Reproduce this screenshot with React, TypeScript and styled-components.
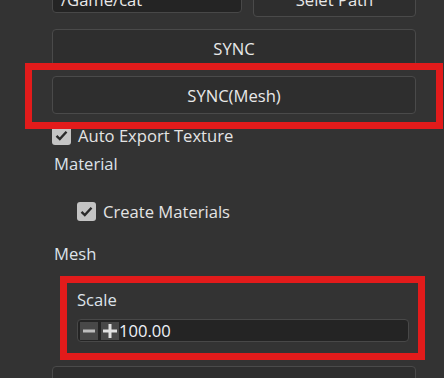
import React from "react";
import styled, { createGlobalStyle } from "styled-components";

const Global = createGlobalStyle`
  html, body { margin: 0; padding: 0; background: #333333; overflow: hidden; }
  body { font-family: "Open Sans", "Noto Sans", sans-serif; color: #e4e4e4; font-size: 16.6px; }
  * { box-sizing: border-box; }
`;

const Panel = styled.div`
  width: 444px;
  height: 378px;
  padding: 0 28px 0 52px;
  display: flex;
  flex-direction: column;
  overflow: hidden;
`;

const PathRow = styled.div`
  margin-top: -19px;
  height: 36px;
  display: flex;
  align-items: center;
  gap: 11px;
  flex-shrink: 0;
`;

const TextInput = styled.div<{ $w?: number }>`
  ${(p) => (p.$w ? `width: ${p.$w}px;` : "flex: 1;")}
  height: 28px;
  background: #242424;
  border: 1px solid #484848;
  border-radius: 4px;
  display: flex;
  align-items: center;
  padding: 0 8px;
  color: #eaeaea;
  flex-shrink: 0;
`;

const Button = styled.div<{ $h?: number; $mt?: number }>`
  position: relative;
  flex-shrink: 0;
  height: ${(p) => p.$h ?? 38}px;
  margin-top: ${(p) => p.$mt ?? 0}px;
  background: #2e2e2e;
  border: 1px solid #4a4a4a;
  border-radius: 4px;
  display: flex;
  align-items: center;
  justify-content: center;
  color: #e8e8e8;
`;

const PathButton = styled(Button)`
  flex: 1;
`;

const Highlight = styled.div<{ $t: number; $r: number; $b: number; $l: number }>`
  position: absolute;
  top: ${(p) => p.$t}px;
  right: ${(p) => p.$r}px;
  bottom: ${(p) => p.$b}px;
  left: ${(p) => p.$l}px;
  border: 7px solid #e21b1b;
  pointer-events: none;
  z-index: 2;
`;

const CheckRow = styled.div<{ $mt: number; $indent?: number }>`
  display: flex;
  align-items: center;
  gap: 7px;
  margin-top: ${(p) => p.$mt}px;
  padding-left: ${(p) => p.$indent ?? 0}px;
  height: 19px;
  flex-shrink: 0;
`;

const Box = styled.span`
  width: 19px;
  height: 19px;
  border-radius: 3px;
  background: #c4c4c4;
  display: flex;
  align-items: center;
  justify-content: center;
  flex-shrink: 0;
`;

const SectionLabel = styled.div<{ $mt: number; $indent?: number }>`
  margin-top: ${(p) => p.$mt}px;
  padding-left: ${(p) => p.$indent ?? 2}px;
  line-height: 22px;
  height: 22px;
  color: #dde3ea;
  flex-shrink: 0;
`;

const Group = styled.div`
  position: relative;
  margin-top: 11px;
  padding: 13px 7px 18px 25px;
  display: flex;
  flex-direction: column;
  gap: 8px;
  flex-shrink: 0;
`;

const NumberField = styled.div`
  height: 23px;
  background: #242424;
  border: 1px solid #484848;
  border-radius: 4px;
  display: flex;
  align-items: center;
  padding: 0 2px;
  gap: 3px;
  color: #eef2f8;
`;

const Spin = styled.span`
  width: 18px;
  height: 18px;
  background: #484848;
  display: flex;
  align-items: center;
  justify-content: center;
  flex-shrink: 0;
`;

const Value = styled.span`
  margin-left: -3px;
`;

const Check = () => (
  <svg width="13" height="11" viewBox="0 0 13 11">
    <path d="M1.5 5.8 L4.8 9 L11.5 1.8" fill="none" stroke="#2a2a2a" strokeWidth="2.4" />
  </svg>
);

const Minus = () => (
  <svg width="14" height="14" viewBox="0 0 14 14">
    <rect x="1" y="5.5" width="12" height="3" fill="#bdbdbd" />
  </svg>
);

const Plus = () => (
  <svg width="16" height="16" viewBox="0 0 16 16">
    <rect x="1" y="6.5" width="14" height="3" fill="#e0e0e0" />
    <rect x="6.5" y="1" width="3" height="14" fill="#e0e0e0" />
  </svg>
);

export default function App() {
  return (
    <>
      <Global />
      <Panel>
        <PathRow>
          <TextInput $w={190}>/Game/cat</TextInput>
          <PathButton $h={36}>Selet Path</PathButton>
        </PathRow>
        <Button $mt={12}>SYNC</Button>
        <Button $mt={9}>
          SYNC(Mesh)
          <Highlight $t={-14} $r={-28} $b={-16} $l={-28} />
        </Button>
        <CheckRow $mt={12}>
          <Box>
            <Check />
          </Box>
          Auto Export Texture
        </CheckRow>
        <SectionLabel $mt={8}>Material</SectionLabel>
        <CheckRow $mt={27} $indent={25}>
          <Box>
            <Check />
          </Box>
          Create Materials
        </CheckRow>
        <SectionLabel $mt={22}>Mesh</SectionLabel>
        <Group>
          <SectionLabel $mt={0} $indent={0}>Scale</SectionLabel>
          <NumberField>
            <Spin>
              <Minus />
            </Spin>
            <Spin>
              <Plus />
            </Spin>
            <Value>100.00</Value>
          </NumberField>
          <Highlight $t={0} $r={-9} $b={0} $l={8} />
        </Group>
        <Button $mt={6} />
      </Panel>
    </>
  );
}
